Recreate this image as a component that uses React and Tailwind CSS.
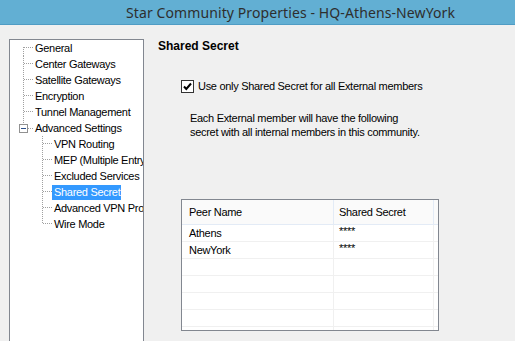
import React from "react";

const nodes = [
  { label: "General", level: 0, first: true },
  { label: "Center Gateways", level: 0 },
  { label: "Satellite Gateways", level: 0 },
  { label: "Encryption", level: 0 },
  { label: "Tunnel Management", level: 0 },
  { label: "Advanced Settings", level: 0, expander: true },
  { label: "VPN Routing", level: 1 },
  { label: "MEP (Multiple Entry Points)", level: 1 },
  { label: "Excluded Services", level: 1 },
  { label: "Shared Secret", level: 1, selected: true },
  { label: "Advanced VPN Properties", level: 1 },
  { label: "Wire Mode", level: 1, last: true },
];

const peers = [
  { name: "Athens", secret: "****" },
  { name: "NewYork", secret: "****" },
  {},
  {},
  {},
  {},
  {},
];

const dot = { stroke: "#a0a0a0", strokeWidth: 1, strokeDasharray: "1 1" };

// dotted tree connector drawn in front of every row
const Connector = ({ node }) => {
  if (node.level === 0) {
    return (
      <svg width="23" height="16" className="shrink-0">
        {node.expander ? (
          <>
            <line x1="13.5" y1="0" x2="13.5" y2="4" {...dot} />
            <rect x="9.5" y="4.5" width="8" height="8" fill="#fff" stroke="#919191" />
            <line x1="11" y1="8.5" x2="16" y2="8.5" stroke="#2c4f8a" />
            <line x1="18" y1="8.5" x2="23" y2="8.5" {...dot} />
          </>
        ) : (
          <>
            <line x1="13.5" y1={node.first ? 7 : 0} x2="13.5" y2="16" {...dot} />
            <line x1="14" y1="7.5" x2="23" y2="7.5" {...dot} />
          </>
        )}
      </svg>
    );
  }
  return (
    <svg width="42" height="16" className="shrink-0">
      <line x1="32.5" y1="0" x2="32.5" y2={node.last ? 8 : 16} {...dot} />
      <line x1="33" y1="7.5" x2="42" y2="7.5" {...dot} />
    </svg>
  );
};

const Tree = () => (
  <div className="w-[135px] h-[310px] shrink-0 border border-[#828790] bg-white overflow-hidden">
    {nodes.map((node) => (
      <div key={node.label} className="flex h-[16px] items-center whitespace-nowrap">
        <Connector node={node} />
        <span
          className={`h-[15px] leading-[15px] pl-[2px] pr-[1px] ${
            node.selected ? "bg-[#3399ff] text-white" : "text-black"
          }`}
        >
          {node.label}
        </span>
      </div>
    ))}
  </div>
);

const Checkbox = () => (
  <svg width="13" height="13" className="shrink-0">
    <rect x="0.5" y="0.5" width="12" height="12" fill="#fff" stroke="#333" />
    <path d="M3 6.5 L5.3 9 L10 3.5" fill="none" stroke="#000" strokeWidth="2" />
  </svg>
);

const PeerTable = () => (
  <div className="flex h-[132px] w-[258px] flex-col border border-[#828790] bg-white overflow-hidden">
    <div className="flex h-[25px] shrink-0 border-b border-[#e3ebf6] bg-[#fafafa]">
      <div className="flex w-[152px] items-center border-r border-[#e3ebf6] pl-[7px]">Peer Name</div>
      <div className="flex w-[100px] items-center border-r border-[#e3ebf6] pl-[5px]">Shared Secret</div>
      <div className="flex-1" />
    </div>
    {peers.map((peer, i) => (
      <div key={i} className="flex h-[17px] shrink-0 border-b border-[#f0f0f0]">
        <div className="flex w-[152px] items-center border-r border-[#f0f0f0] pl-[7px]">{peer.name}</div>
        <div className="w-[100px] border-r border-[#f0f0f0] pl-[5px] leading-[13px]">{peer.secret}</div>
        <div className="flex-1" />
      </div>
    ))}
  </div>
);

export default function App() {
  return (
    <div className="w-[515px] h-[341px] overflow-hidden bg-[#f0f0f0] text-[11px] tracking-[-0.3px] text-black [font-family:'Liberation_Sans',Arial,sans-serif]">
      {/* Title bar */}
      <div className="flex h-[25px] items-center border-b border-[#4f9cc4] bg-[#62afd3] pl-[126px]">
        <span className="text-[14px] tracking-[0.1px] text-[#2e2e2e] [font-family:'Noto_Sans',sans-serif]">
          Star Community Properties - HQ-Athens-NewYork
        </span>
      </div>

      <div className="flex pl-[9px] pt-[14px]">
        <Tree />

        <div className="ml-[14px] flex flex-col">
          <h2 className="h-[14px] text-[12px] font-bold leading-[14px] tracking-normal">Shared Secret</h2>

          {/* Checkbox row */}
          <label className="ml-[23px] mt-[27px] flex h-[13px] items-center gap-[4px]">
            <Checkbox />
            <span>Use only Shared Secret for all External members</span>
          </label>

          <p className="ml-[32px] mt-[18px] leading-[14px]">
            Each External member will have the following
            <br />
            secret with all internal members in this community.
          </p>

          <div className="ml-[23px] mt-[60px]">
            <PeerTable />
          </div>
        </div>
      </div>
    </div>
  );
}
